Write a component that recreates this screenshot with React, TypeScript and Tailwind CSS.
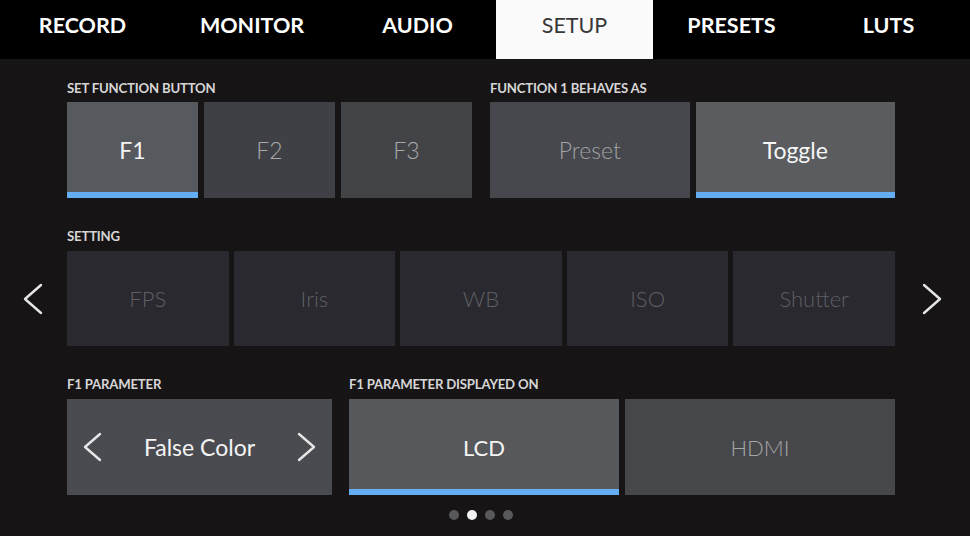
import clsx from "clsx"

const tabs = [
  { label: "RECORD", w: "w-[165px]" },
  { label: "MONITOR", w: "w-[174px]" },
  { label: "AUDIO", w: "w-[157px]" },
  { label: "SETUP", w: "w-[157px]", active: true },
  { label: "PRESETS", w: "w-[157px]" },
  { label: "LUTS", w: "w-[157px]" },
]

function Chevron({ dir, w = 20, h = 32 }: { dir: "left" | "right"; w?: number; h?: number }) {
  const pts = dir === "left" ? `${w - 2},2 2,${h / 2} ${w - 2},${h - 2}` : `2,2 ${w - 2},${h / 2} 2,${h - 2}`
  return (
    <svg width={w} height={h} viewBox={`0 0 ${w} ${h}`} fill="none">
      <polyline points={pts} stroke="#e6e6e6" strokeWidth="2.4" strokeLinecap="round" strokeLinejoin="round" />
    </svg>
  )
}

function Tile({
  label,
  bg,
  color,
  active,
  light,
  size = "text-[23px]",
  className,
}: {
  label: string
  bg: string
  color: string
  active?: boolean
  light?: boolean
  size?: string
  className?: string
}) {
  return (
    <div className={clsx("relative flex items-center justify-center", bg, className)}>
      <span className={clsx(size, color, light ? "font-light" : "font-normal")}>{label}</span>
      {/* selection bar */}
      {active && <div className="absolute bottom-0 left-0 right-0 h-[6px] bg-[#64adf2]" />}
    </div>
  )
}

function Label({ children, className }: { children: string; className?: string }) {
  return (
    <div className={clsx("h-[16px] text-[13.2px] leading-[16px] font-bold text-[#d6d6d6] tracking-[-0.2px]", className)}>
      {children}
    </div>
  )
}

export default function App() {
  return (
    <div className="w-[970px] h-[536px] overflow-hidden bg-[#171415] font-['Lato',sans-serif]">
      {/* Tabs */}
      <div className="flex h-[59px] bg-black">
        {tabs.map((t) => (
          <div
            key={t.label}
            className={clsx(
              "flex items-center justify-center pb-[8px] text-[21.5px] leading-none",
              t.w,
              t.active ? "bg-[#fafafa] text-[#383838] font-normal" : "text-white font-bold"
            )}
          >
            {t.label}
          </div>
        ))}
      </div>

      {/* Function button */}
      <div className="mt-[21px] ml-[67px] mr-[75px] grid grid-cols-2 gap-[18px]">
        <div className="flex flex-col gap-[6px]">
          <Label>SET FUNCTION BUTTON</Label>
          <div className="grid grid-cols-3 gap-[6px] h-[96px]">
            <Tile label="F1" bg="bg-[#56595e]" color="text-[#f4f4f4]" active />
            <Tile label="F2" bg="bg-[#3e4045]" color="text-[#a9a9a9]" light />
            <Tile label="F3" bg="bg-[#414347]" color="text-[#a9a9a9]" light />
          </div>
        </div>
        <div className="flex flex-col gap-[6px]">
          <Label>FUNCTION 1 BEHAVES AS</Label>
          <div className="grid grid-cols-2 gap-[6px] h-[96px]">
            <Tile label="Preset" bg="bg-[#46484d]" color="text-[#a2a2a2]" light />
            <Tile label="Toggle" bg="bg-[#5a5c60]" color="text-[#f6f6f6]" active />
          </div>
        </div>
      </div>

      {/* Setting */}
      <div className="mt-[30px] grid grid-cols-[67px_1fr_75px] grid-rows-[16px_95px] gap-y-[7px]">
        <div />
        <Label>SETTING</Label>
        <div />
        <div className="flex items-center justify-center pr-[2px]">
          <Chevron dir="left" />
        </div>
        <div className="grid grid-cols-5 gap-[5px]">
          {["FPS", "Iris", "WB", "ISO", "Shutter"].map((s) => (
            <Tile key={s} label={s} bg="bg-[#29292f]" color="text-[#5f5f63]" light size="text-[22px]" />
          ))}
        </div>
        <div className="flex items-center justify-center pr-[2px]">
          <Chevron dir="right" />
        </div>
      </div>

      {/* F1 parameter */}
      <div className="mt-[30px] ml-[67px] mr-[75px] flex gap-[17px]">
        <div className="w-[265px] flex flex-col gap-[7px]">
          <Label>F1 PARAMETER</Label>
          <div className="h-[96px] bg-[#4a4b50] flex items-center justify-between px-[16px]">
            <Chevron dir="left" w={19} h={30} />
            <span className="text-[23px] text-[#f4f4f4]">False Color</span>
            <Chevron dir="right" w={19} h={30} />
          </div>
        </div>
        <div className="flex-1 flex flex-col gap-[7px]">
          <Label>F1 PARAMETER DISPLAYED ON</Label>
          <div className="grid grid-cols-2 gap-[6px] h-[96px]">
            <Tile label="LCD" bg="bg-[#56585c]" color="text-[#f4f4f4]" active size="text-[22px]" />
            <Tile label="HDMI" bg="bg-[#46474b]" color="text-[#a6a6a6]" light size="text-[22px]" />
          </div>
        </div>
      </div>

      {/* Page dots */}
      <div className="mt-[15px] ml-[67px] mr-[75px] flex justify-center gap-[8px]">
        <div className="w-[10px] h-[10px] rounded-full bg-[#58585c]" />
        <div className="w-[10px] h-[10px] rounded-full bg-[#f2f2f2]" />
        <div className="w-[10px] h-[10px] rounded-full bg-[#58585c]" />
        <div className="w-[10px] h-[10px] rounded-full bg-[#58585c]" />
      </div>
    </div>
  )
}
